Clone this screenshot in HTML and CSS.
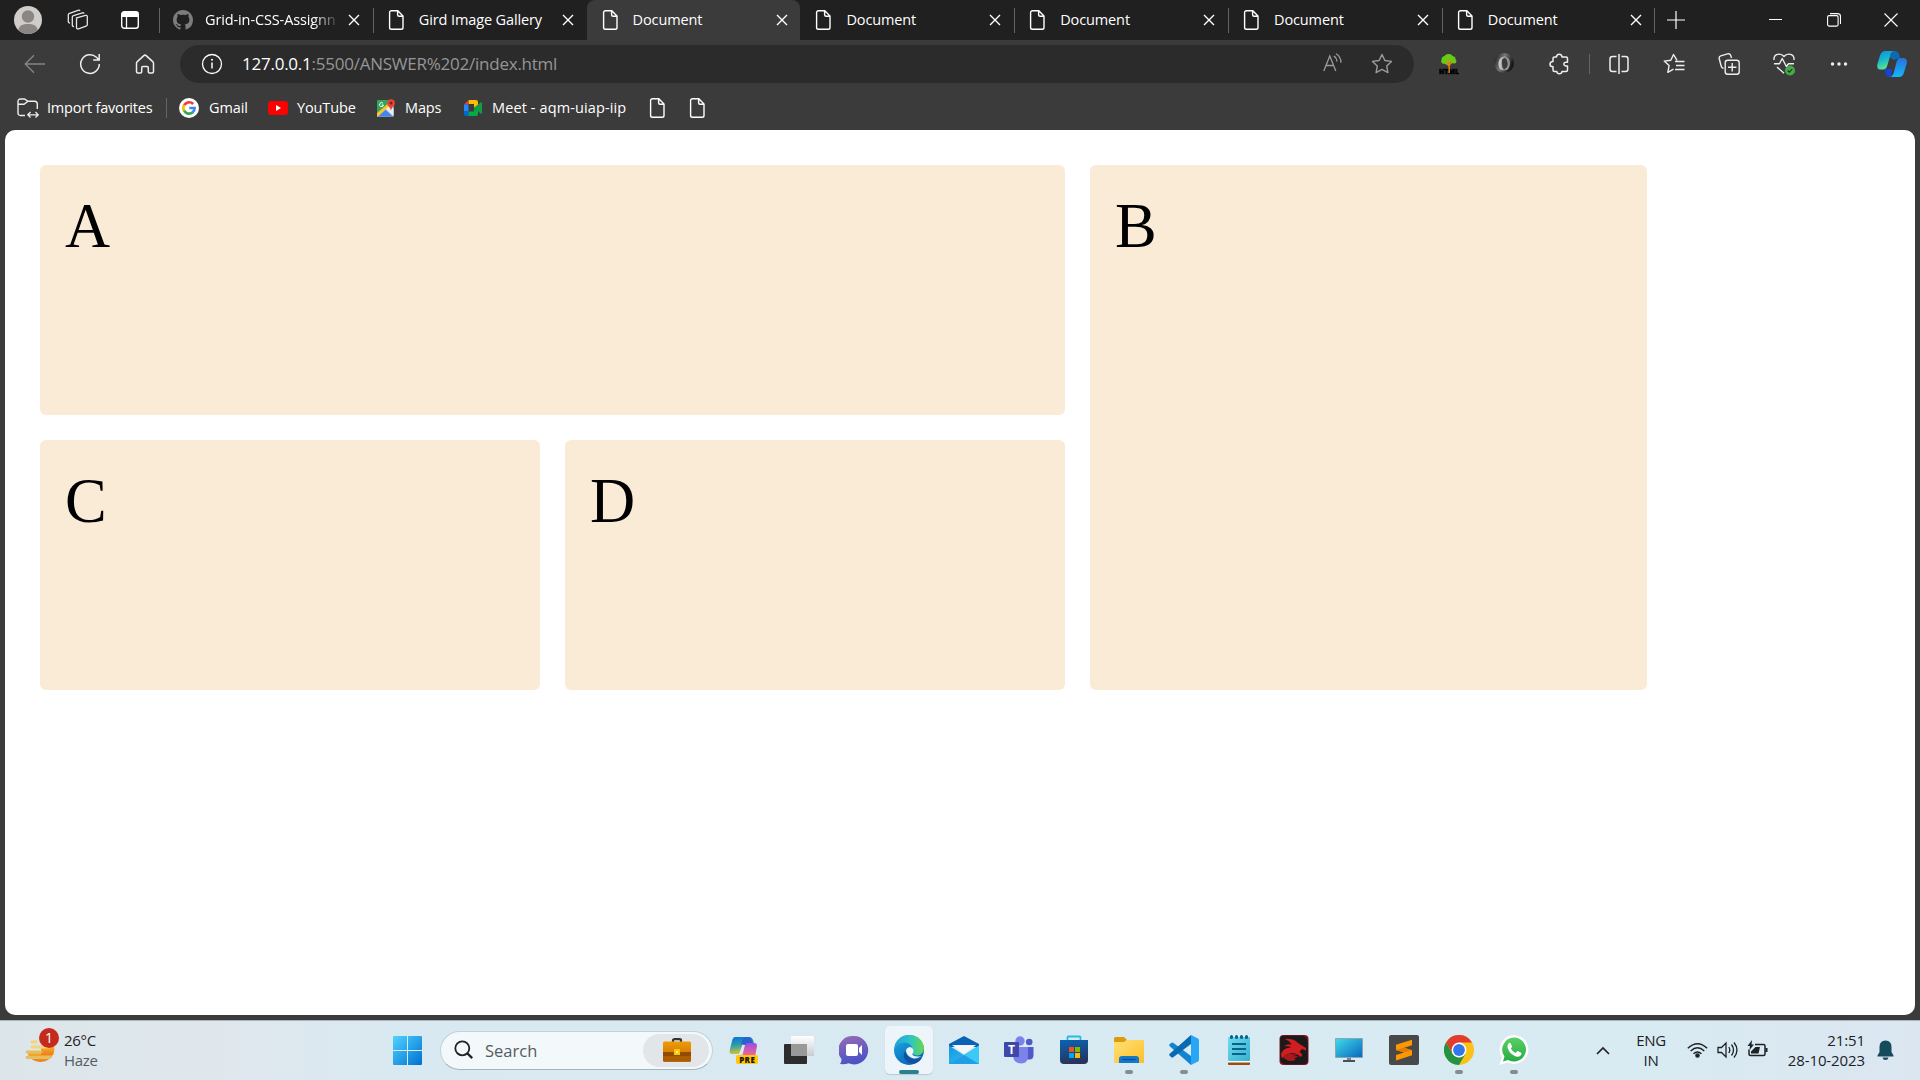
FILE: index.html
```html
<!DOCTYPE html>
<html lang="en">
<head>
<meta charset="utf-8">
<title>Document</title>
<link rel="stylesheet" href="styles.css">
</head>
<body>
<svg class="defs" width="0" height="0">
  <defs>
    <symbol id="file" viewBox="0 0 20 20"><path d="M4.5.8h6.3l5.2 5.3v11.4a1.8 1.8 0 0 1-1.8 1.8H4.4a1.8 1.8 0 0 1-1.8-1.8V2.6A1.8 1.8 0 0 1 4.5.8ZM10.6 1v3.8A1.5 1.5 0 0 0 12.100 6.300h3.8" fill="none" stroke="#fff" stroke-width="1.400"/></symbol>
    <symbol id="close" viewBox="0 0 12 12"><path d="M1 1l10 10M11 1L1 11" stroke="#fff" stroke-width="1.400"/></symbol>
    <linearGradient id="win" x2="1" y2="1"><stop offset="0" stop-color="#4fd4ff"/><stop offset="1" stop-color="#0070d0"/></linearGradient>
    <linearGradient id="cpA" x2=".3" y2="1"><stop offset="0" stop-color="#118fdc"/><stop offset=".5" stop-color="#15b5d0"/><stop offset="1" stop-color="#5de08f"/></linearGradient>
    <linearGradient id="cpB" x2="0" y2="1"><stop offset="0" stop-color="#2870dc"/><stop offset="1" stop-color="#14b8fa"/></linearGradient>
    <linearGradient id="preA" x2=".2" y2="1"><stop offset="0" stop-color="#0870dc"/><stop offset=".5" stop-color="#2c9cac"/><stop offset="1" stop-color="#d0c43c"/></linearGradient>
    <linearGradient id="preB" x2="0" y2="1"><stop offset="0" stop-color="#9a4de4"/><stop offset="1" stop-color="#ff6b87"/></linearGradient>
    <linearGradient id="tvw" x2="0" y2="1"><stop offset="0" stop-color="#fff"/><stop offset="1" stop-color="#c8ccd0"/></linearGradient>
    <linearGradient id="chat" x2=".3" y2="1"><stop offset="0" stop-color="#9a6bb4"/><stop offset="1" stop-color="#4b53c6"/></linearGradient>
    <linearGradient id="edG"><stop offset="0" stop-color="#23a5da"/><stop offset=".5" stop-color="#2cc3c9"/><stop offset="1" stop-color="#66d94b"/></linearGradient>
    <linearGradient id="edB" x2=".6" y2="1"><stop offset="0" stop-color="#1bb0e4"/><stop offset="1" stop-color="#0b62b8"/></linearGradient>
    <linearGradient id="mail" x2="1" y2="1"><stop offset="0" stop-color="#1597e0"/><stop offset="1" stop-color="#35c4f4"/></linearGradient>
    <linearGradient id="store" x2=".2" y2="1"><stop offset="0" stop-color="#0a64b4"/><stop offset="1" stop-color="#27345c"/></linearGradient>
    <linearGradient id="fold" x2="1" y2="1"><stop offset="0" stop-color="#ffe07a"/><stop offset="1" stop-color="#fdbf26"/></linearGradient>
    <linearGradient id="note" x2="1" y2="1"><stop offset="0" stop-color="#70dcee"/><stop offset="1" stop-color="#36b0d0"/></linearGradient>
    <linearGradient id="pc" x2="1" y2="1"><stop offset="0" stop-color="#3ddae6"/><stop offset="1" stop-color="#0b68c0"/></linearGradient>
    <linearGradient id="wa" x2="0" y2="1"><stop offset="0" stop-color="#5bd066"/><stop offset="1" stop-color="#25ac43"/></linearGradient>
    <linearGradient id="haze" x2="0" y2="1"><stop offset="0" stop-color="#f5b52d"/><stop offset="1" stop-color="#ef7b1c"/></linearGradient>
    <linearGradient id="case" x2="0" y2="1"><stop offset="0" stop-color="#f09a08"/><stop offset="1" stop-color="#c46c00"/></linearGradient>
    <linearGradient id="ring" x2="1" y2=".4"><stop offset="0" stop-color="#0c0c0c"/><stop offset=".5" stop-color="#777"/><stop offset="1" stop-color="#161616"/></linearGradient>
    <linearGradient id="ringIn"><stop offset="0" stop-color="#ccc"/><stop offset="1" stop-color="#888"/></linearGradient>
  </defs>
</svg>

<header class="browser">
  <div class="tabstrip">
    <div class="strip-tools">
      <span class="strip-profile"><svg width="28" height="28" viewBox="0 0 28 28"><circle cx="14" cy="14" r="14" fill="#cfccc9"/><circle cx="14" cy="10.500" r="6.200" fill="#8b8683"/><path d="M4.500 24.200C4.500 19.500 9 18 14 18s9.500 1.500 9.500 6.200A14 14 0 0 1 4.500 24.200Z" fill="#8b8683"/></svg></span>
      <span class="strip-work"><svg width="22" height="22" viewBox="0 0 22 22" fill="none" stroke="#e6e6e6" stroke-width="1.300"><path d="M8.800 9.200 18.500 6.400q1.800-.4 1.800 1.400v7.600q0 1.300-1.300 1.700l-7.500 2.700q-2 .6-2-1.300V10.500q0-1 1.200-1.400"/><path d="M7 17.500q-1.700.2-1.700-1.500V8.200q0-1.200 1.200-1.600l9-2.800q1.200-.2 1.600.8"/><path d="M3 14q-1.700 0-1.700-1.500V5.800q0-1.100 1.200-1.500l8.500-3q1.500-.4 2 .8"/></svg></span>
      <span class="strip-vert"><svg width="18" height="18" viewBox="0 0 18 18"><rect x=".7" y=".7" width="16.600" height="16.600" rx="2.500" fill="none" stroke="#fff" stroke-width="1.400"/><path d="M1 1h16v5H1z" fill="#fff"/><path d="M5.500 6v11" stroke="#fff" stroke-width="1.300"/></svg></span>
    </div>
    <div class="tab divided"><svg class="tab-icon" viewBox="0 0 16 16"><path fill="#7d7d7d" d="M8 0C3.580 0 0 3.580 0 8c0 3.540 2.290 6.530 5.470 7.590.4.070.55-.17.55-.38 0-.19-.01-.82-.01-1.490-2.010.37-2.530-.49-2.690-.94-.09-.23-.48-.94-.82-1.130-.28-.15-.68-.52-.01-.53.63-.01 1.080.58 1.230.82.72 1.210 1.870.87 2.330.66.070-.52.28-.87.51-1.070-1.780-.2-3.640-.89-3.640-3.950 0-.87.31-1.590.82-2.150-.08-.2-.36-1.020.08-2.120 0 0 .67-.21 2.200.82.64-.18 1.320-.27 2-.27s1.360.09 2 .27c1.530-1.040 2.200-.82 2.200-.82.44 1.100.16 1.920.08 2.120.51.56.82 1.270.82 2.150 0 3.070-1.870 3.750-3.650 3.950.29.25.54.73.54 1.480 0 1.070-.01 1.930-.01 2.200 0 .21.15.46.55.38A8.010 8.010 0 0 0 16 8c0-4.420-3.580-8-8-8Z"/></svg><span class="tab-title clipped">Grid-in-CSS-Assignn</span><svg class="tab-close"><use href="#close"/></svg></div>
    <div class="tab divided"><svg class="tab-icon"><use href="#file"/></svg><span class="tab-title">Gird Image Gallery</span><svg class="tab-close"><use href="#close"/></svg></div>
    <div class="tab active"><svg class="tab-icon"><use href="#file"/></svg><span class="tab-title">Document</span><svg class="tab-close"><use href="#close"/></svg></div>
    <div class="tab"><svg class="tab-icon"><use href="#file"/></svg><span class="tab-title">Document</span><svg class="tab-close"><use href="#close"/></svg></div>
    <div class="tab divided"><svg class="tab-icon"><use href="#file"/></svg><span class="tab-title">Document</span><svg class="tab-close"><use href="#close"/></svg></div>
    <div class="tab divided"><svg class="tab-icon"><use href="#file"/></svg><span class="tab-title">Document</span><svg class="tab-close"><use href="#close"/></svg></div>
    <div class="tab last divided"><svg class="tab-icon"><use href="#file"/></svg><span class="tab-title">Document</span><svg class="tab-close"><use href="#close"/></svg></div>
    <div class="new-tab divided"><svg width="18" height="18" viewBox="0 0 18 18"><path d="M9 0v18M0 9h18" stroke="#fff" stroke-width="1.200"/></svg></div>
    <div class="window-controls">
      <span><svg width="14" height="14"><path d="M0 6.500h13" stroke="#fff"/></svg></span>
      <span><svg width="14" height="14" fill="none" stroke="#fff" stroke-width="1.100"><rect x=".6" y="2.600" width="10.500" height="10.500" rx="1.500"/><path d="M3 .6h7.500a3 3 0 0 1 3 3V11"/></svg></span>
      <span><svg width="14" height="14"><path d="M.5.500l13 13M13.500.500l-13 13" stroke="#fff" stroke-width="1.100"/></svg></span>
    </div>
  </div>

  <div class="toolbar">
    <span class="tool"><svg width="22" height="20" viewBox="0 0 22 20" fill="none" stroke="#858585" stroke-width="1.400"><path d="M21 10H1.500M10 1.200 1.300 10l8.700 8.800"/></svg></span>
    <span class="tool"><svg width="22" height="22" viewBox="0 0 22 22" fill="none" stroke="#eee" stroke-width="1.500"><path d="M20.300 11a9.300 9.300 0 1 1-2.900-6.700l2.300 2.200M20.200 1v5.900h-6"/></svg></span>
    <span class="tool"><svg width="20" height="22" viewBox="0 0 20 22" fill="none" stroke="#eee" stroke-width="1.500"><path d="M1.500 10.300q0-1 .8-1.700l6.500-6q1.200-1 2.400 0l6.500 6q.8.700.8 1.700v8.200q0 1.500-1.500 1.500h-2.500q-1.200 0-1.200-1.200v-4q0-1.300-1.300-1.300H8q-1.300 0-1.300 1.300v4Q6.700 20 5.500 20H3q-1.500 0-1.500-1.500Z"/></svg></span>
    <div class="omnibox">
      <svg width="22" height="22" viewBox="0 0 22 22"><circle cx="11" cy="11" r="9.500" fill="none" stroke="#fff" stroke-width="1.300"/><path d="M11 9.500v6" stroke="#fff" stroke-width="1.500"/><circle cx="11" cy="6.700" r="1" fill="#fff"/></svg>
      <div class="url"><b>127.0.0.1</b>:5500/ANSWER%202/index.html</div>
      <div class="omni-actions">
        <svg width="20" height="20" viewBox="0 0 20 20" fill="none" stroke="#9b9b9b" stroke-width="1.300"><path d="M.8 18 6.800 3l6 15M3 12.500h7.600M10.800 3q3 1.800 3 5.500M13 .8q5 3 5 9"/></svg>
        <svg width="22" height="22" viewBox="0 0 22 22" fill="none" stroke="#9b9b9b" stroke-width="1.400" stroke-linejoin="round"><path d="m11 1.500 2.900 6 6.600.9-4.800 4.600 1.200 6.600-5.900-3.200-5.900 3.200 1.200-6.600L1.500 8.400l6.600-.9Z"/></svg>
      </div>
    </div>
    <div class="extensions">
      <span class="tool"><svg width="20" height="22" viewBox="0 0 20 22"><path d="M10 1c2 0 3 .8 3.500 2 2 .3 3.300 1.600 3 3.200 2 2 .5 4.500-1.800 4.300L11 9.500 9 11c-2 1-3 .3-3.500-.3C3 11 1.500 9 2.500 7c0-2 1-3.700 3-4C6.500 1.500 8 1 10 1Z" fill="#63cc17"/><text x="0" y="20.500" class="tree-label" textLength="20" lengthAdjust="spacingAndGlyphs">HTML</text><path d="M10.200 20V6M10 13 6.500 9M10.300 12l3.500-3.500" fill="none" stroke="#e38518" stroke-width="1.400"/></svg></span>
      <span class="tool"><svg width="20" height="20" viewBox="0 0 20 20"><circle cx="10" cy="10" r="10" fill="url(#ring)"/><path d="M12.500 3.500Q5 2.500 4.500 10t6 7.500Q6.500 14 8 9t4.500-5.500ZM10 3.500q6 .5 6 7t-6.500 7Q14 14 13.500 9.500T10 3.500Z" fill="url(#ringIn)"/><ellipse cx="10.600" cy="10.300" rx="2.700" ry="5" fill="#3b3b3b" transform="rotate(-8 10 10)"/></svg></span>
      <span class="tool"><svg width="20" height="22" viewBox="0 0 20 22" fill="none" stroke="#eee" stroke-width="1.500" stroke-linejoin="round"><path d="M5.500 4h2q0-2.800 2.700-2.800T13 4h4q1.500 0 1.500 1.500v3.700h-1.800q-1.900.2-1.900 1.900t1.900 1.900h1.800V17q0 1.500-1.500 1.500h-4q-.2 2.300-2.600 2.300t-2.600-2.300H5.500Q4 18.500 4 17v-3.200Q1 13.700 1 11.200T4 8.600V5.500Q4 4 5.500 4Z"/></svg></span>
    </div>
    <div class="edge-tools">
      <span class="tool"><svg width="20" height="20" viewBox="0 0 20 20" fill="none" stroke="#eee" stroke-width="1.500"><path d="M10 0v20M7.500 2.500H3.500q-2.500 0-2.500 2.500v10q0 2.500 2.500 2.500h4M12.500 2.500h4q2.500 0 2.500 2.500v10q0 2.500-2.500 2.500h-4"/></svg></span>
      <span class="tool"><svg width="22" height="22" viewBox="0 0 22 22" fill="none" stroke="#eee" stroke-width="1.400" stroke-linejoin="round"><path d="M14 7.300 10.500 1.500 7.800 7.200l-6.600.9 4.900 4.500-1.300 6.800 5.700-3.200M12 8.500h9.500M13 12.500h8.500M12 16.500h9.500" /></svg></span>
      <span class="tool"><svg width="22" height="22" viewBox="0 0 22 22" fill="none" stroke="#eee" stroke-width="1.400"><rect x="7.200" y="7.200" width="14" height="14" rx="2.500"/><path d="M14.200 10v8.400M10 14.200h8.400M5.500 15.500Q3.500 15 3 12.500L1.200 5.500Q.8 3.500 2.800 2.800L9.500.9q2.500-.5 3.200 1.500l.8 2.600"/></svg></span>
      <span class="tool"><svg width="22" height="24" viewBox="0 0 22 24" fill="none" stroke="#eee" stroke-width="1.400" stroke-linejoin="round"><path d="M1 8Q.500 2.300 6 2.100 9 2 11 4.500 13 2 16 2.100 21.500 2.300 21 8M1 11.800h5.500l2.700-5.300 4.200 8 2.100-2.700H21M4 15l7 6.300"/><circle cx="17" cy="18.500" r="5" fill="#47a84c" stroke="none"/><path d="m14.700 18.500 1.600 1.700 3-3" stroke="#183b1b" stroke-width="1.200"/></svg></span>
      <span class="tool"><svg width="18" height="6" viewBox="0 0 18 6" fill="#eee"><circle cx="2.500" cy="3" r="1.700"/><circle cx="9" cy="3" r="1.700"/><circle cx="15.500" cy="3" r="1.700"/></svg></span>
      <span class="tool copilot"><svg width="30" height="28" viewBox="0 0 30 28"><path d="M16 1h2q3 .2 4 3l1 4-6 2-5-3Z" fill="#0a6bb0"/><path d="M7 19h8l-1 8h-2q-3-.4-3.500-4Z" fill="#1444d4"/><path d="M8 1h9q-3 .8-4 5l-2.500 9q-1 4-4 4.500H3Q-.4 19 .3 14.500L3 5.500Q4.500 1 8 1Z" fill="url(#cpA)"/><path d="M22 27h-9q3-.8 4-5l2-8q1-6 4.500-6H27q3.500.6 2.800 5L27 22.500Q25.500 27 22 27Z" fill="url(#cpB)"/></svg></span>
    </div>
  </div>

  <nav class="favorites">
    <div class="fav import"><svg width="22" height="20" viewBox="0 0 22 20" fill="none" stroke="#eee" stroke-width="1.400"><path d="M8 17.500H3.500q-2.500 0-2.500-2.500V3.500Q1 1 3.500 1h4L11 3.300h6.500q2.800 0 2.800 2.800v5M1 6.300h6L11 3.300"/><path d="M11 16.800h10M13.500 14l-2.700 2.800 2.700 2.700M18.500 14l2.700 2.800-2.700 2.700" stroke-width="1.300"/></svg><span>Import favorites</span></div>
    <div class="fav gmail"><svg width="20" height="20" viewBox="0 0 20 20"><circle cx="10" cy="10" r="10" fill="#fff"/><g fill="none" stroke-width="2.700"><path d="M5.100 7.200A5.700 5.700 0 0 1 14.200 6" stroke="#ea4335"/><path d="M5.100 7.100a5.800 5.800 0 0 0 0 5.800" stroke="#fbbc05"/><path d="M5.100 12.700a5.700 5.700 0 0 0 8.700 1.600" stroke="#34a853"/><path d="M10.300 10h5.300q0 2.800-2 4.400" stroke="#4285f4"/></g></svg><span>Gmail</span></div>
    <div class="fav youtube"><svg width="20" height="14" viewBox="0 0 20 14"><rect width="20" height="14" rx="3.500" fill="#f00"/><path d="M8 4v6l5-3Z" fill="#fff"/></svg><span>YouTube</span></div>
    <div class="fav maps"><svg width="18" height="18" viewBox="0 0 18 18"><rect y="1" width="16.500" height="16.500" rx="1" fill="#34a45a"/><path d="M0 17.500 16.500 3v14.500Z" fill="#d9dde2"/><path d="M1 17.500 8 10l8 7.500Z" fill="#4285f4"/><path d="M0 14 13 3l2 2L1 17.500H0Z" fill="#fbc72a"/><path d="m9 9 7.500 7.500V10l-3-3Z" fill="#eef0f2"/><path d="M14 .2a3.900 3.900 0 0 1 3.900 3.900C17.900 7 14.500 8 14 12c-.5-4-3.900-5-3.900-7.900A3.900 3.900 0 0 1 14 .2Z" fill="#e94335"/><circle cx="14" cy="4" r="1.500" fill="#8c1d18"/><path d="M6 4.300a2 2 0 1 0 .5 1.700H4.700" stroke="#fff" fill="none"/></svg><span>Maps</span></div>
    <div class="fav meet"><svg width="18" height="16" viewBox="0 0 18 16"><path d="M4.500 0H12q2 0 2 2v3L10 8V4H4.500Z" fill="#fbbc04"/><path d="M4.500 0v4.500H0Z" fill="#ea4335"/><path d="M0 4.500h4.500v7H0Z" fill="#2684fc"/><path d="M0 11.500h4.500V16H2q-2 0-2-2Z" fill="#0066da"/><path d="M4.500 11.500H10V8l4 3v3q0 2-2 2H4.500Z" fill="#00ac47"/><path d="m10 8 7-5.700q1-.5 1 .5v10.400q0 1-1 .5Z" fill="#149b45"/></svg><span>Meet - aqm-uiap-iip</span></div>
    <svg class="fav-file"><use href="#file"/></svg>
    <svg class="fav-file"><use href="#file"/></svg>
  </nav>
</header>

<main class="viewport">
  <div class="grid">
    <div class="box box-a">A</div>
    <div class="box box-b">B</div>
    <div class="box box-c">C</div>
    <div class="box box-d">D</div>
  </div>
</main>

<footer class="taskbar">
  <div class="weather">
    <div class="weather-icon"><svg width="30" height="28" viewBox="0 0 30 28"><path d="M3 15h26a14 13 0 0 1-26 3Z" fill="url(#haze)"/><path d="M16 9h13a14 14 0 0 1-1 9H16Z" fill="url(#haze)"/><g stroke="#f6d477" stroke-width="2.800" stroke-linecap="round"><path d="M7 5h4M7 10h17"/><path d="M2 15h14M2 20.500h23" stroke="#e5bd62"/></g></svg><span class="badge">1</span></div>
    <div class="weather-text"><span>26°C</span><span class="muted">Haze</span></div>
  </div>
  <div class="dock">
    <svg class="start" width="29" height="29" viewBox="0 0 29 29"><rect width="29" height="29" rx="1" fill="url(#win)"/><path d="M14.500 0v29M0 14.500h29" stroke="#dcecf4"/></svg>
    <div class="search">
      <svg width="20" height="20" viewBox="0 0 20 20" fill="none" stroke="#222"><circle cx="8.300" cy="8.300" r="7" stroke-width="1.800"/><path d="m13.500 13.500 4.700 4.700" stroke-width="2.400"/></svg>
      <span class="search-label">Search</span>
      <span class="search-chip"><svg width="28" height="24" viewBox="0 0 28 24"><path d="M10 4V2.500Q10 1.200 11.500 1.200h5Q18 1.200 18 2.500V4" fill="none" stroke="#333" stroke-width="2.200"/><rect y="3.500" width="28" height="20" rx="1.500" fill="url(#case)"/><path d="M0 14h28v8q0 1.500-1.500 1.500h-25Q0 23.500 0 22Z" fill="#914b02"/><path d="M0 18h28v4q0 1.500-1.500 1.500h-25Q0 23.500 0 22Z" fill="#ae5c00"/><rect x="11" y="11" width="6" height="6" fill="#f7c709"/><rect x="13" y="13" width="2" height="2" fill="#fff080"/></svg></span>
    </div>
    <div class="apps">
      <span class="app"><svg width="30" height="30" viewBox="0 0 30 30"><path d="M6 2h15q3 1 4 6l-8 2-3-2-4 11H2Q0 18 1 14L3 6q1-4 3-4Z" fill="url(#preA)"/><path d="M17 2q4 0 6 4l1 3-9 1-3-1q1-6 5-7Z" fill="#2d60ce"/><path d="M16 10q1-2 4-2h5q3 0 3 3l-2 11H13Z" fill="url(#preB)"/><rect x="7" y="20" width="22" height="9" rx="2" fill="#ffc60b"/><text x="18.200" y="27.500" class="pre-label">PRE</text></svg></span>
      <span class="app"><svg width="30" height="30" viewBox="0 0 30 30"><rect x="0" y="9" width="23" height="20" rx="1" fill="#2d2d2d"/><rect x="7" y="1" width="23" height="20" rx="1" fill="url(#tvw)"/><path d="M7 9h16v12H7z" fill="#999"/></svg></span>
      <span class="app"><svg width="30" height="30" viewBox="0 0 30 30"><path d="M15 1a14.200 14.200 0 1 1-5.500 27.300Q6 29.500 1 29q1.800-2 1.500-5A14.200 14.200 0 0 1 15 1Z" fill="url(#chat)"/><rect x="7" y="9" width="12" height="12" rx="2" fill="#fff"/><path d="m20 13 3-3v10l-3-3Z" fill="#fff"/></svg></span>
      <span class="app current"><svg width="30" height="30" viewBox="0 0 30 30"><circle cx="15" cy="15" r="15" fill="url(#edB)"/><path d="M1 10Q5 0 15.500 0 26 0 29.500 10q1.500 7-3 9.500-4 2-8-.5 1.500-2 .5-4.500Q16 6 8 8 3 9 1 13Z" fill="url(#edG)"/><path d="M11.500 16q-3.500 4-.5 8.500 4 5.500 11 3.500 4-1.500 6-5-5 2.500-9.500 1-5.500-2-7-8Z" fill="#1152a0"/><path d="M12 16q0-3 3.500-4 4.500.8 4 5-1.500 2-1 3 3.500 2.500 9 1Q22 25 17 22.500 12.500 20 12 16Z" fill="#eaf6fa"/></svg></span>
      <span class="app"><svg width="30" height="30" viewBox="0 0 30 30"><path d="M0 9 15 1l15 8v3H0Z" fill="#0862b5"/><path d="M3 10h24l-12 9Z" fill="#f4f6f8"/><path d="M0 10.500 15 20 30 10.500V29H0Z" fill="url(#mail)"/><path d="M30 10.500 15 20l15 9Z" fill="#3bc9f5"/><path d="M15 20 0 29h30Z" fill="#1fa0e4"/></svg></span>
      <span class="app"><svg width="30" height="30" viewBox="0 0 30 30"><circle cx="16" cy="6" r="4.700" fill="#7b83eb"/><circle cx="25.200" cy="7" r="3.300" fill="#5059c9"/><path d="M20 12h9.500v8q0 5-5 4.500H20Z" fill="#5059c9"/><path d="M9 12h15v9q0 7.500-7 7.500T9 21Z" fill="#7b83eb"/><rect y="7" width="15" height="15" rx="1" fill="#4047ab"/><text x="7.500" y="19" class="teams-label">T</text></svg></span>
      <span class="app"><svg width="30" height="30" viewBox="0 0 30 30"><path d="M8.500 8V2.500q0-1 1-1h11q1 0 1 1V8" fill="none" stroke="#24bde9" stroke-width="1.800"/><path d="M1 5h28v20q0 4-4 4H5q-4 0-4-4Z" fill="url(#store)"/><path d="M10 12h5v5h-5z" fill="#f25022"/><path d="M16 12h5v5h-5z" fill="#7fba00"/><path d="M10 18h5v5h-5z" fill="#00a4ef"/><path d="M16 18h5v5h-5z" fill="#ffb900"/></svg></span>
      <span class="app running"><svg width="30" height="30" viewBox="0 0 30 30"><path d="M0 7V3.500Q0 2 1.500 2H10l3 3v3Z" fill="#dd9b06"/><path d="M0 7h10l2.500-2H29q1 0 1 1v22H0Z" fill="url(#fold)"/><path d="M5 28v-4q0-3 3-3h14q3 0 3 3v4Z" fill="#1477c8"/><path d="M8.500 24.500h13" stroke="#0b4f91" stroke-width="1.300"/></svg></span>
      <span class="app running"><svg width="30" height="30" viewBox="0 0 30 30"><path d="M22 0v30L1 11.500q-1.500-1.300 0-2.500l1-1q1.200-1 2.500 0L22 21Z" fill="#1384d2"/><path d="M22 0v9L4.500 22q-1.300 1-2.500 0l-1-1q-1.500-1.300 0-2.500Z" fill="#066bb3"/><path d="m22 0 7 3.500q1 .5 1 1.800v19.400q0 1.300-1 1.800L22 30Z" fill="#27a7f3"/></svg></span>
      <span class="app"><svg width="30" height="30" viewBox="0 0 30 30"><rect x="4" y="24" width="22" height="6" rx="1" fill="#9a4c10"/><path d="M4 25h22v2.500H4z" fill="#fff"/><rect x="4" y="2" width="22" height="24" rx="1" fill="url(#note)"/><path d="M8 9h14M8 14h14M8 19h14" stroke="#08638a" stroke-width="1.800"/><path d="M7.500 1.500v1M12.500 1.500v1M17.500 1.500v1M22.500 1.500v1" stroke="#08638a" stroke-width="3" stroke-linecap="round"/></svg></span>
      <span class="app"><svg width="30" height="30" viewBox="0 0 30 30"><rect x=".5" y="0" width="29" height="30" rx="4" fill="#8e1020"/><path d="M5 .8h18q5 0 5.700 6V25q0 4.200-4 4.200H7Q1.200 29 1.200 24V5q0-4.200 3.800-4.200Z" fill="#1b1919"/><path d="M5 4q9-1 14 4l8 5v2.500l-4-1.500-2.500 3-2-1q4 1.500 5 4l-2 2q-4-5-11-3.500-6 1.500-7 5-3-4 .5-8 3-3 8-3-2-2-7-1 3-3 8-2-3-4-7-5.500Z" fill="#d11e21"/><path d="M4 22q4-4 8-3l8 .5-6 1.500 6 .5-5 2 2 1q-7 4-13-2.500Z" fill="#a91919"/></svg></span>
      <span class="app"><svg width="30" height="30" viewBox="0 0 30 30"><path d="M13 22h4v4h-4z" fill="#7c8590"/><path d="M9 25h12v2H9z" fill="#4a5058"/><rect x="1" y="3" width="28" height="20" rx="1" fill="#89a6b6"/><path d="M2 4h26v18H2z" fill="url(#pc)"/></svg></span>
      <span class="app"><svg width="30" height="30" viewBox="0 0 30 30"><rect width="30" height="30" rx="2" fill="#484848"/><path d="m7 9.800 16-5v5.400l-8 2.500 8 2.500v5L7 25.500v-5.400l8-2.600-8-2.500Z" fill="#ff9800"/><path d="m7 15 8 2.500 8-2.300-8-2.500Z" fill="#e57b08"/></svg></span>
      <span class="app running"><svg width="30" height="30" viewBox="0 0 30 30"><circle cx="15" cy="15" r="15" fill="#fbc116"/><path d="M2 7.500A15 15 0 0 1 28 7.500H15L8.500 18.700Z" fill="#e33b2e"/><path d="M2 7.500 8.500 18.700 15 22.500 21.500 18.700 15 30A15 15 0 0 1 2 7.500Z" fill="#229342"/><circle cx="15" cy="15" r="7.400" fill="#fff"/><circle cx="15" cy="15" r="5.900" fill="#3277e9"/></svg></span>
      <span class="app running"><svg width="30" height="30" viewBox="0 0 30 30"><path d="M15 0a14.500 14.500 0 1 1-6.500 27.500L.5 30l2.300-7.800A14.500 14.500 0 0 1 15 0Z" fill="#fff"/><path d="M15 2.500a12 12 0 1 1-6 22.400l-5 1.500 1.500-4.900A12 12 0 0 1 15 2.500Z" fill="url(#wa)"/><path d="M9.500 8.500q1.200-1.500 2.300 0l1.200 2.700q.2.800-1.200 2.200 1.600 3 4.800 4.600l1.500-1.700q.6-.4 1.200-.1l2.500 1.200q1 .5.500 2-1 2.500-4 2.300-4.500-.8-7.800-5Q7 12 9.500 8.500Z" fill="#fff"/></svg></span>
    </div>
  </div>
  <div class="tray">
    <svg class="chevron" width="14" height="9" viewBox="0 0 14 9"><path d="m1 8 6-6 6 6" fill="none" stroke="#222" stroke-width="1.700"/></svg>
    <div class="lang"><span>ENG</span><span>IN</span></div>
    <div class="status">
      <svg width="21" height="20" viewBox="0 0 21 20" fill="none" stroke="#1c2226" stroke-width="1.400"><path d="M.8 8.200q9.700-9 19.400 0M3.700 11q6.800-6.300 13.600 0M6.500 13.800q4-3.700 8 0"/><circle cx="10.500" cy="15.500" r="1.600" fill="#1c2226"/></svg>
      <svg width="21" height="20" viewBox="0 0 21 20" fill="none" stroke="#1c2226" stroke-width="1.300"><path d="M1 7.500h3.500L9 3v14l-4.500-4.500H1ZM11.800 7q2 3 0 6M14.500 4.500q4 5.500 0 11M17 2.500q6 7.500 0 15"/></svg>
      <svg width="21" height="20" viewBox="0 0 21 20"><path d="M8 4.500h8.500q1.500 0 1.500 1.500v8q0 1.500-1.500 1.500h-13Q2 15.500 2 14V9.500" fill="none" stroke="#1c2226" stroke-width="1.500"/><path d="M18.500 8h2v4h-2zM4 13.500v-2L8.500 7H13l-1.500 6.500Z" fill="#1c2226"/><path d="M5 0 .5 6H3L2.500 10 7 4.500H4.500Z" fill="#1c2226"/></svg>
    </div>
    <div class="clock"><span>21:51</span><span>28-10-2023</span></div>
    <svg width="17" height="20" viewBox="0 0 17 20"><path d="M8.500.500Q14.500.900 14.500 7v5l2 3.500v1H.500v-1l2-3.500V7Q2.500.900 8.500.500ZM5.500 17.500h6Q11 20 8.500 20t-3-2.500Z" fill="#164b5c"/></svg>
  </div>
</footer>
</body>
</html>
```
FILE: styles.css
```css
* { box-sizing: border-box; }

body {
  margin: 0;
  width: 1920px;
  height: 1080px;
  overflow: hidden;
  display: flex;
  flex-direction: column;
  background: #3b3b3b;
  font-family: "Open Sans", "Noto Sans", sans-serif;
  font-size: 15px;
  color: #fff;
}

svg { flex: none; display: block; }
.defs { position: absolute; }

/* Browser chrome */
.browser { height: 130px; flex: none; }

.tabstrip {
  display: flex;
  height: 40px;
  background: #202020;
}

.strip-tools {
  width: 159px;
  flex: none;
  display: flex;
  align-items: center;
  padding-left: 14px;
}
.strip-work { margin-left: 25px; }
.strip-vert { margin-left: 32px; }

.tab {
  width: 213.8px;
  flex: none;
  display: flex;
  align-items: center;
  padding-left: 14px;
}
.tab.last { width: 212.2px; }
.divided {
  background: linear-gradient(#646464, #646464) 0 8px / 1px 25px no-repeat;
}
.tab.active {
  background: #3b3b3b;
  border-radius: 8px 8px 0 0;
}
.tab-icon { width: 20px; height: 20px; }
.tab-title {
  width: 140px;
  margin-left: 12px;
  padding-bottom: 2px;
  font-size: 14.5px;
  letter-spacing: -0.12px;
  white-space: nowrap;
}
.tab-title.clipped {
  -webkit-mask-image: linear-gradient(90deg, #000 108px, transparent 135px);
  mask-image: linear-gradient(90deg, #000 108px, transparent 135px);
}
.tab-close { width: 12px; height: 12px; margin-left: 3px; }
.last .tab-close { margin-left: 2px; }

.new-tab { padding: 11px 0 0 13px; width: 60px; }
.window-controls {
  margin-left: auto;
  display: flex;
  align-items: center;
}
.window-controls span {
  width: 57.5px;
  display: flex;
  justify-content: center;
}

.toolbar {
  height: 48px;
  display: flex;
  align-items: center;
  padding-left: 7px;
}
.tool {
  width: 55px;
  flex: none;
  display: flex;
  justify-content: center;
}
.omnibox {
  width: 1234px;
  height: 38px;
  flex: none;
  margin-left: 8px;
  display: flex;
  align-items: center;
  padding: 0 21px;
  border-radius: 19px;
  background: #2b2b2b;
}
.url {
  margin-left: 19px;
  padding-bottom: 2px;
  font-size: 17px;
  letter-spacing: -0.24px;
  color: #969696;
}
.url b { font-weight: 400; color: #fff; }
.omni-actions { margin-left: auto; display: flex; gap: 28px; }
.extensions, .edge-tools { display: flex; }
.extensions { margin-left: 7px; }
.edge-tools {
  align-items: center;
  height: 20px;
  margin-left: 3px;
  border-left: 1px solid #646464;
  padding-left: 1px;
}
.copilot { width: 52px; }
.tree-label {
  font: 800 6.500px "Open Sans", sans-serif;
  fill: #000;
  stroke: #000;
  stroke-width: .5px;
}

.favorites {
  height: 40px;
  display: flex;
  align-items: center;
  padding-left: 17px;
  font-size: 14.5px;
  letter-spacing: -0.12px;
  white-space: nowrap;
}
.fav { display: flex; align-items: center; gap: 10px; height: 20px; }
.fav span { padding-bottom: 2px; }
.import { width: 150px; gap: 8px; letter-spacing: -0.2px; border-right: 1px solid #646464; }
.gmail { width: 89px; margin-left: 12px; }
.youtube { width: 109px; gap: 9px; }
.maps { width: 87px; }
.meet { width: 174px; letter-spacing: 0.12px; }
.fav-file { width: 20px; height: 20px; margin: 0 10px; }
.meet + .fav-file { margin-left: 10px; }

/* Page content */
.viewport {
  height: 885px;
  flex: none;
  margin: 0 5px;
  padding: 35px;
  border-radius: 10px;
  background: #fff;
}
.grid {
  display: grid;
  grid-template-columns: 500px 500px 557px;
  grid-template-rows: 250px 250px;
  gap: 25px;
}
.box {
  padding: 25px;
  border-radius: 6px;
  background: #faebd7;
  color: #000;
  font: 62.5px/73px "Liberation Serif", serif;
}
.box-a { grid-column: 1 / 3; }
.box-b { grid-column: 3; grid-row: 1 / 3; }

/* Taskbar */
.taskbar {
  height: 60px;
  margin-top: 5px;
  display: flex;
  align-items: center;
  background: linear-gradient(90deg, #dce6ea 0, #dfe7ed 220px, #d8e9f1 420px, #d8eaf2 1650px, #dbe6f1 1920px);
  border-top: 1px solid #a9b3ba;
  color: #1d2226;
}
.weather { width: 393px; display: flex; align-items: center; padding-left: 25px; }
.weather-icon { position: relative; width: 30px; margin-right: 9px; }
.badge {
  position: absolute;
  left: 14px;
  top: -9px;
  width: 20px;
  height: 20px;
  border-radius: 50%;
  background: #c42b1c;
  color: #fff;
  font-size: 14px;
  line-height: 20px;
  text-align: center;
}
.weather-text, .lang, .clock {
  display: flex;
  flex-direction: column;
  padding-bottom: 2px;
  font-size: 15px;
  line-height: 20px;
  letter-spacing: -0.3px;
}
.muted { color: #555d62; }

.dock { display: flex; align-items: center; padding-bottom: 1px; }
.search {
  width: 273px;
  height: 39px;
  margin-left: 18px;
  display: flex;
  align-items: center;
  padding: 0 3px 0 13px;
  border: 1px solid #c1d2da;
  border-bottom-color: #a5b3bb;
  border-radius: 20px;
  background: #f3f8fb;
}
.search-label { margin-left: 11px; font-size: 16.500px; color: #555b60; }
.search-chip {
  width: 66px;
  height: 33px;
  margin-left: auto;
  display: flex;
  align-items: center;
  justify-content: center;
  border-radius: 17px;
  background: #e2e6e9;
}
.search-chip svg { margin-left: 1px; }
.apps { display: flex; margin-left: 3.5px; }
.app {
  position: relative;
  width: 55px;
  height: 48px;
  display: flex;
  align-items: center;
  justify-content: center;
}
.app.current {
  width: 48px;
  margin: 0 3.5px;
  border-radius: 5px;
  background: #edf5fa;
  box-shadow: 0 1px 1px #b9c9d1;
}
.running::after, .current::after {
  content: "";
  position: absolute;
  bottom: 0;
  left: calc(50% - 4px);
  width: 8px;
  height: 4px;
  border-radius: 2px;
  background: #858c90;
}
.current::after {
  left: 14px;
  width: 20px;
  background: #27818f;
}
.pre-label {
  font: 800 8px "Open Sans", sans-serif;
  letter-spacing: .4px;
  text-anchor: middle;
  fill: #1b1600;
}
.teams-label {
  font: 700 12px "Open Sans", sans-serif;
  text-anchor: middle;
  fill: #fff;
}

.tray {
  margin-left: auto;
  display: flex;
  align-items: center;
  padding-right: 26px;
}
.tray > svg, .status { margin-bottom: 1px; }
.lang { width: 44px; margin-left: 19px; align-items: center; }
.status { display: flex; gap: 9px; margin-left: 14px; }
.clock { width: 97px; align-items: flex-end; margin-right: 12px; letter-spacing: -0.1px; }
```
